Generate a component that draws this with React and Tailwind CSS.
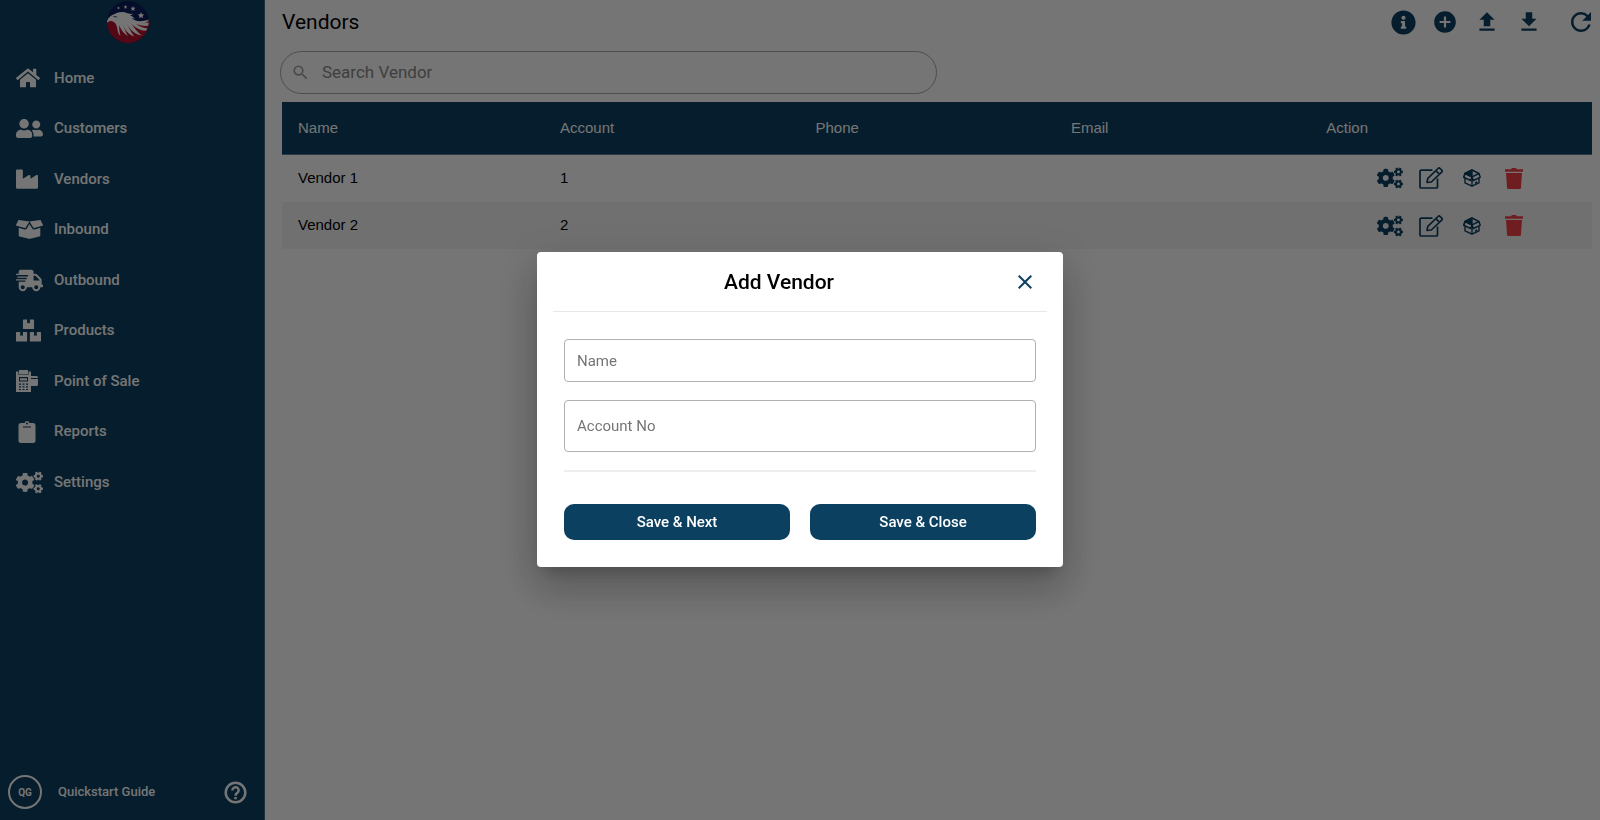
import { useState } from "react";
import {
  FaHome,
  FaUserFriends,
  FaIndustry,
  FaBoxOpen,
  FaShippingFast,
  FaBoxes,
  FaCogs,
  FaInfoCircle,
} from "react-icons/fa";
import {
  MdAddCircle,
  MdUpload,
  MdDownload,
  MdRefresh,
  MdSearch,
  MdClose,
} from "react-icons/md";

const PosIcon = ({ className }) => (
  <svg viewBox="0 0 22 22" fill="currentColor" className={className}>
    <path
      fillRule="evenodd"
      d="M0 1.500h2.500V5h10V1.500H15V22H0zM3 7v4.500h9V7zM3 13.500v1.200h2v-1.200zm3.500 0v1.200h2v-1.200zm3.500 0v1.200h2v-1.200zM3 16.200v1.200h2v-1.200zm3.500 0v1.200h2v-1.200zm3.500 0v1.200h2v-1.200zM3 18.900v1.200h2v-1.200zm3.500 0v1.200h2v-1.200zm3.500 0v1.200h2v-1.200z"
    />
    <path d="M3 0h9v4.500H3zM4 8.200h7v2.200H4zM15 6h5.500A1.500 1.500 0 0 1 22 7.500V8h-7zM15 9h7v5.500a1.500 1.500 0 0 1-1.500 1.500H15z" />
  </svg>
);

const ClipboardIcon = ({ className }) => (
  <svg viewBox="0 0 22 22" fill="currentColor" className={className}>
    <path
      fillRule="evenodd"
      d="M5 2h3.500a2.600 2.600 0 0 1 5 0H17a2.500 2.500 0 0 1 2.500 2.500v15A2.500 2.500 0 0 1 17 22H5a2.500 2.500 0 0 1-2.500-2.500v-15A2.500 2.500 0 0 1 5 2zm6-.4a1 1 0 1 0 0 2 1 1 0 0 0 0-2zM7 5.500v1h8v-1z"
    />
  </svg>
);

const HelpIcon = ({ className }) => (
  <svg viewBox="0 0 24 24" fill="none" stroke="currentColor" strokeWidth="2.400" className={className}>
    <circle cx="12" cy="12" r="9.400" />
    <path d="M9 10a3 3 0 1 1 4.800 2.300c-1.100.8-1.800 1.400-1.800 2.900M12 16.200v2.300" />
  </svg>
);

const EditIcon = ({ className }) => (
  <svg
    viewBox="0 0 24 22"
    fill="none"
    stroke="currentColor"
    strokeWidth="1.700"
    strokeLinejoin="round"
    className={className}
  >
    <path d="M13.500 3.200H2a1 1 0 0 0-1 1V20a1 1 0 0 0 1 1h15.500a1 1 0 0 0 1-1v-8.500" />
    <path d="M8 15.500l.8-4.200L19 1.500a1.500 1.500 0 0 1 2.100 0l1.600 1.600a1.500 1.500 0 0 1 0 2.100L12.300 15zM16.800 3.600l3.700 3.700" />
  </svg>
);

const PackageIcon = ({ className }) => (
  <svg
    viewBox="0 0 18 18"
    fill="none"
    stroke="currentColor"
    strokeWidth="1.400"
    strokeLinejoin="round"
    className={className}
  >
    <path d="M9 1l7 3.500 1.200 3.800L16 9v4.800l-7 3.400-7-3.400V9L.8 8.300 2 4.500zM9 7.800v9.400M16 4.500L9 7.800l1.300 3.700 6.900-3.200M12 14l2.200-1.100" />
    <path fill="currentColor" d="M9 1v6.800L2 4.500z" />
    <path d="M2 4.500l7 3.300-1.300 3.700L.8 8.300z" />
  </svg>
);

const TrashIcon = ({ className }) => (
  <svg viewBox="0 0 18 21" fill="currentColor" className={className}>
    <path d="M0 1.200h6L7 0h4l1 1.200h6v2.600H0zM1 5h16l-1 14.500a1.500 1.500 0 0 1-1.500 1.500h-11A1.500 1.500 0 0 1 2 19.500z" />
  </svg>
);

const EagleLogo = ({ className }) => (
  <svg viewBox="0 0 42 42" className={className}>
    <defs>
      <clipPath id="badge">
        <circle cx="21" cy="21" r="21" />
      </clipPath>
    </defs>
    <g clipPath="url(#badge)">
      <path fill="#0a1f5c" d="M0 0h42v42H0z" />
      <path fill="#b8102f" d="M0 21c8-3 16-4 22-1 8 3 15 2 20-1v23H0z" />
      <g fill="#fff">
        {/* head and crest */}
        <path d="M0 21.500c0-4 3-6.500 7.500-8.500 4-2.500 9-2.800 13-.8 2 .6 4 .8 6 .6-1.300.9-2.300 1.200-3.500 1.400 2.500 1 3.500 2.300 5 3.400-1.500 0-2.400-.1-3.500-.5 3 3 9 4.500 17.500 1.400-1 2.400-4 4-7.500 4.500L16 23 8 20.500c-3-1-6-.6-8 1z" />
        {/* wing feathers */}
        <path d="M5 20c4 1.500 5 5 5.500 9 .4 2.500 1.500 4.500 3 6-2-8-.5-12-3-15.500z" />
        <path d="M9 19.500c4 4 4 11 12 15.500-3.500-5.500-4-11-7-15.500z" />
        <path d="M13 19.500c4 5 5 13 14.500 16-4.500-5-6-11-9.500-16z" />
        <path d="M17 20c5 4.500 7 13 18 14.500-6-4-8-9-13-14.500z" />
        <path d="M21 20c5 4 9 9.500 18 9.800l1.500-2.300c-7-.7-10-4-15.500-7.500z" />
        <path d="M24 20.500c5 2.500 10 5 17.300 4.300L42 21.500c-6 1.500-11 .5-17-2z" />
        <path d="M34 11l.9 2.200 2.400.2-1.800 1.600.6 2.300-2.100-1.300-2.100 1.300.6-2.300-1.800-1.600 2.400-.2z" />
        <path d="M26 5l.7 1.700 1.900.1-1.500 1.200.5 1.900-1.600-1-1.600 1 .5-1.900-1.500-1.200 1.900-.1z" />
        <path d="M18.500 4l.5 1.300 1.400.1-1.100.9.4 1.400-1.200-.8-1.200.8.400-1.400-1.100-.9 1.400-.1z" />
        <path d="M11.500 5.500l.4 1 1 .1-.8.7.3 1-.9-.5-.9.5.3-1-.8-.7 1-.1z" />
      </g>
      <path stroke="#0a1f5c" strokeWidth=".8" fill="none" d="M6.500 15.500l3.500.5" />
    </g>
  </svg>
);

const navItems = [
  { label: "Home", icon: FaHome, size: "size-6" },
  { label: "Customers", icon: FaUserFriends, size: "size-[27px]" },
  { label: "Vendors", icon: FaIndustry, size: "size-[22px]" },
  { label: "Inbound", icon: FaBoxOpen, size: "size-[27px]" },
  { label: "Outbound", icon: FaShippingFast, size: "size-[27px]" },
  { label: "Products", icon: FaBoxes, size: "size-[25px]" },
  { label: "Point of Sale", icon: PosIcon, size: "size-[22px]" },
  { label: "Reports", icon: ClipboardIcon, size: "size-[22px]" },
  { label: "Settings", icon: FaCogs, size: "size-[27px]" },
];

const vendors = [
  { name: "Vendor 1", account: "1", phone: "", email: "" },
  { name: "Vendor 2", account: "2", phone: "", email: "" },
];

const Sidebar = () => (
  <aside className="w-[265px] shrink-0 bg-[#0b4060] border-r border-[#3d6680] text-white flex flex-col">
    <div className="h-[53px] flex justify-center pt-px pr-2">
      <EagleLogo className="size-[42px]" />
    </div>
    <nav className="flex flex-col justify-between h-[454px]">
      {navItems.map(({ label, icon: Icon, size }) => (
        <a
          key={label}
          href="#"
          className="flex items-center h-[50px] pl-4 text-[15px] font-medium"
        >
          <span className="w-[38px] flex items-center">
            <Icon className={size} />
          </span>
          {label}
        </a>
      ))}
    </nav>
    <div className="mt-auto flex items-center pl-2 pr-4 pb-[11px]">
      <span className="size-[34px] rounded-full border-2 flex items-center justify-center text-[10px] font-bold">
        QG
      </span>
      <a href="#" className="ml-4 text-[13px] font-medium">
        Quickstart Guide
      </a>
      <button type="button" aria-label="Help" className="ml-auto">
        <HelpIcon className="size-[25px]" />
      </button>
    </div>
  </aside>
);

const VendorTable = () => (
  <table className="w-full table-fixed mt-2 text-left text-[15px] font-['Liberation_Sans',sans-serif]">
    <thead className="bg-[#0b4060] text-white">
      <tr className="h-[52px] border-b border-[#5a7f96]">
        <th className="w-[20%] pl-4 font-normal">Name</th>
        <th className="w-[19.5%] pl-4 font-normal">Account</th>
        <th className="w-[19.5%] pl-4 font-normal">Phone</th>
        <th className="w-[19.5%] pl-4 font-normal">Email</th>
        <th className="pl-4 font-normal">Action</th>
      </tr>
    </thead>
    <tbody>
      {vendors.map((v) => (
        <tr key={v.name} className="odd:h-12 even:h-[47px] even:bg-[#f5f5f5]">
          <td className="pl-4">{v.name}</td>
          <td className="pl-4">{v.account}</td>
          <td className="pl-4">{v.phone}</td>
          <td className="pl-4">{v.email}</td>
          <td>
            <div className="flex items-center justify-center gap-4 pl-0.5 text-[#0b4060]">
              <button type="button" aria-label="Configure">
                <FaCogs className="size-[26px]" />
              </button>
              <button type="button" aria-label="Edit">
                <EditIcon className="w-6 h-[22px]" />
              </button>
              <button type="button" aria-label="Products" className="w-[26px] flex justify-center">
                <PackageIcon className="size-[18px]" />
              </button>
              <button type="button" aria-label="Delete" className="w-[26px] flex justify-center">
                <TrashIcon className="w-[18px] h-[21px] text-[#f5414a]" />
              </button>
            </div>
          </td>
        </tr>
      ))}
    </tbody>
  </table>
);

const AddVendorModal = ({ onClose }) => (
  <div className="fixed inset-0 bg-black/54 flex items-center justify-center">
    <div
      role="dialog"
      aria-labelledby="add-vendor"
      className="w-[526px] mb-px rounded bg-white px-4 pb-[27px] shadow-[0_11px_15px_-7px_rgba(0,0,0,0.2),0_24px_38px_3px_rgba(0,0,0,0.14),0_9px_46px_8px_rgba(0,0,0,0.12)]"
    >
      <div className="flex items-center h-[60px] border-b border-[#e8e8e8]">
        <h2 id="add-vendor" className="flex-1 pt-0.5 pr-2 text-center text-[21px] font-medium">
          Add Vendor
        </h2>
        <button type="button" aria-label="Close" onClick={onClose} className="mr-2.5 text-[#0b4060]">
          <MdClose className="size-6" />
        </button>
      </div>
      <form className="px-[11px] pt-[27px]" onSubmit={(e) => e.preventDefault()}>
        <input
          type="text"
          aria-label="Name"
          placeholder="Name"
          className="block w-full h-[43px] px-3 rounded border border-[#b0b0b0] text-[15px] placeholder:text-[#757575]"
        />
        <input
          type="text"
          aria-label="Account No"
          placeholder="Account No"
          className="block w-full h-[52px] mt-[18px] px-3 rounded border border-[#b0b0b0] text-[15px] placeholder:text-[#757575]"
        />
        <hr className="mt-[18px] border-t-2 border-[#eeeeee]" />
        <div className="mt-8 grid grid-cols-2 gap-5">
          <button
            type="submit"
            className="h-9 rounded-[10px] bg-[#0b4060] text-white text-[15px] font-medium"
          >
            Save &amp; Next
          </button>
          <button
            type="button"
            className="h-9 rounded-[10px] bg-[#0b4060] text-white text-[15px] font-medium"
          >
            Save &amp; Close
          </button>
        </div>
      </form>
    </div>
  </div>
);

const App = () => {
  const [open, setOpen] = useState(true);

  return (
    <div className="min-h-screen flex bg-white text-black font-[Roboto,sans-serif]">
      <Sidebar />
      <main className="flex-1 pl-[17px] pr-2">
        <header className="flex items-center h-[44px]">
          <h1 className="pt-0.5 text-[21px]">Vendors</h1>
          <div className="ml-auto flex items-center text-[#0b4060]">
            <button type="button" aria-label="Info">
              <FaInfoCircle className="size-[25px]" />
            </button>
            <button type="button" aria-label="Add vendor" className="ml-4" onClick={() => setOpen(true)}>
              <MdAddCircle className="size-[26px]" />
            </button>
            <button type="button" aria-label="Upload" className="ml-4">
              <MdUpload className="size-[26px]" />
            </button>
            <button type="button" aria-label="Download" className="ml-4">
              <MdDownload className="size-[26px]" />
            </button>
            <button type="button" aria-label="Refresh" className="ml-6 -mr-1">
              <MdRefresh className="size-[30px]" />
            </button>
          </div>
        </header>
        <label className="-ml-0.5 mt-[7px] flex items-center w-[657px] h-[43px] px-2.5 rounded-full border border-[#a8a8a8] text-[#8a8a8a]">
          <MdSearch className="size-[19px] text-[#a0a0a0]" />
          <input
            type="search"
            aria-label="Search Vendor"
            placeholder="Search Vendor"
            className="ml-3 flex-1 text-[17px] outline-none placeholder:text-[#8a8a8a]"
          />
        </label>
        <VendorTable />
      </main>
      {open && <AddVendorModal onClose={() => setOpen(false)} />}
    </div>
  );
};

export default App;
